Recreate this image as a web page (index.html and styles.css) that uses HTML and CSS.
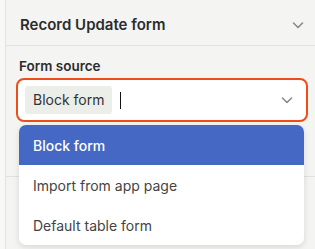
FILE: index.html
```html
<!DOCTYPE html>
<html lang="en">
<head>
    <meta charset="UTF-8">
    <meta name="viewport" content="width=device-width, initial-scale=1.0">
    <title>Record Update form</title>
    <link rel="stylesheet" href="styles.css">
</head>
<body>

    <div class="gutter"></div>

    <div class="panel">

        <!-- Section header -->
        <div class="section-header">
            <h3>Record Update form</h3>
            <svg class="chevron" width="14" height="14" viewBox="0 0 14 14">
                <path d="M2.5 5 L7 9.5 L11.5 5" fill="none" stroke="#8a8a8a" stroke-width="1.6" stroke-linecap="round" stroke-linejoin="round"/>
            </svg>
        </div>

        <!-- Form source field -->
        <div class="field">
            <label class="field-label">Form source</label>
            <div class="select">
                <span class="tag">Block form</span>
                <span class="caret"></span>
                <svg class="chevron select-chevron" width="14" height="14" viewBox="0 0 14 14">
                    <path d="M2.5 5 L7 9.5 L11.5 5" fill="none" stroke="#8a8a8a" stroke-width="1.6" stroke-linecap="round" stroke-linejoin="round"/>
                </svg>
            </div>

            <!-- Dropdown menu -->
            <ul class="menu">
                <li class="active">Block form</li>
                <li>Import from app page</li>
                <li>Default table form</li>
            </ul>
        </div>

        <div class="section-rest"></div>

    </div>

</body>
</html>
```

FILE: styles.css
```css
* {
    margin: 0;
    padding: 0;
    box-sizing: border-box;
}

body {
    display: flex;
    height: 100vh;
    overflow: hidden;
    background: #f4f4f3;
    font-family: Inter, "Noto Sans", sans-serif;
    color: #333;
}

.gutter {
    width: 6px;
    background: #f8f8f8;
    border-right: 1px solid #e2e2e1;
}

.panel {
    flex: 1;
    display: flex;
    flex-direction: column;
}

/* Section header */
.section-header {
    height: 46px;
    display: flex;
    align-items: center;
    justify-content: space-between;
    padding: 4px 10px 0 14px;
    border-bottom: 1px solid #e1e1e0;
}

.section-header h3 {
    font-size: 15px;
    font-weight: 600;
    color: #2c2c2c;
}

/* Field */
.field {
    position: relative;
    height: 131px;
    padding: 12px 7px 0 10px;
    border-bottom: 1px solid #e1e1e0;
}

.field-label {
    display: block;
    padding-left: 3px;
    font-size: 13.5px;
    font-weight: 600;
    color: #2c2c2c;
    margin-bottom: 4px;
}

.select {
    height: 44px;
    display: flex;
    align-items: center;
    padding: 0 12px 0 7px;
    background: #fff;
    border: 2px solid #f04c16;
    border-radius: 8px;
}

.tag {
    background: #eceeea;
    border-radius: 3px;
    padding: 6px 8px;
    font-size: 14px;
    color: #333;
    line-height: 16px;
}

.caret {
    width: 1px;
    height: 17px;
    background: #111;
    margin-left: 8px;
}

.select-chevron {
    margin-left: auto;
}

/* Dropdown menu */
.menu {
    position: absolute;
    top: 79px;
    left: 13px;
    width: 285px;
    list-style: none;
    background: #fff;
    border-radius: 7px;
    box-shadow: 0 2px 6px rgba(0, 0, 0, 0.12);
    overflow: hidden;
}

.menu li {
    height: 40px;
    display: flex;
    align-items: center;
    padding-left: 14px;
    font-size: 14px;
    color: #444;
}

.menu li.active {
    background: #4568c4;
    color: #fff;
    font-weight: 500;
}

.section-rest {
    flex: 1;
}
```
